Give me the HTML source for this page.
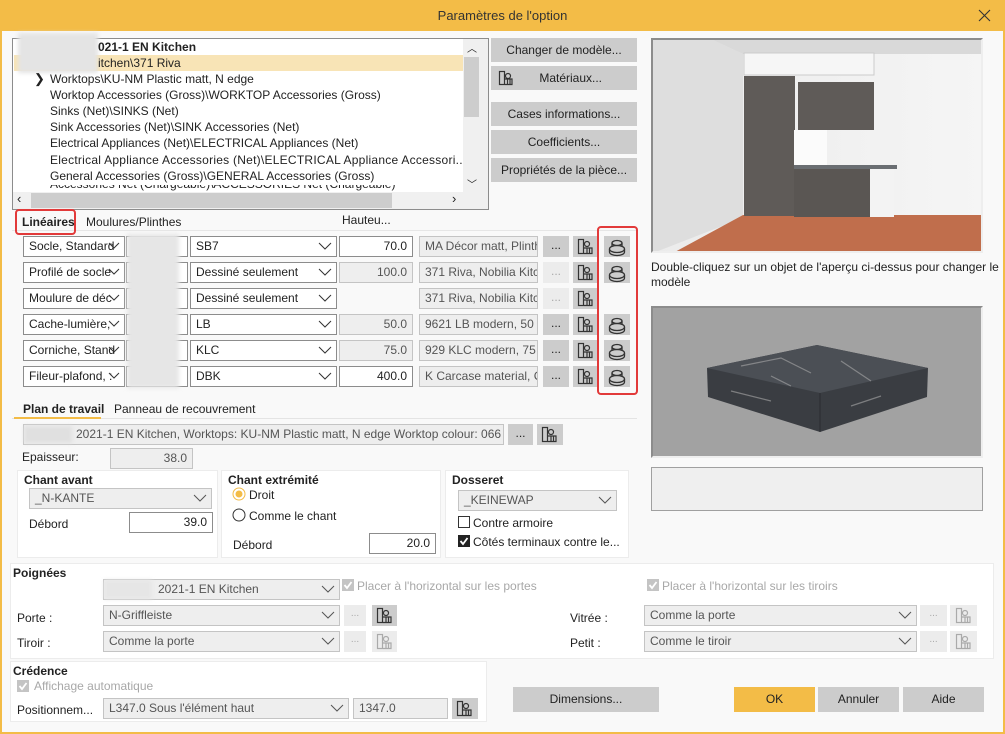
<!DOCTYPE html>
<html><head><meta charset="utf-8"><style>
*{box-sizing:border-box;margin:0;padding:0}
body{width:1005px;height:734px;overflow:hidden;background:#f9f9f9;font-family:"Liberation Sans",sans-serif;font-size:12px;color:#222}
.a{position:absolute}
.win{position:absolute;left:0;top:0;width:1005px;height:734px;border:2px solid #f3bc47;border-top:none;background:#f9f9f9}
.tb{position:absolute;left:0;top:0;width:1005px;height:31px;background:#f3bc47;text-align:center;line-height:31px;font-size:13px;color:#333}
.sel{position:absolute;height:21px;background:#fff;border:1px solid #8c8c8c;line-height:19px;padding-left:5px;white-space:nowrap;overflow:hidden;color:#222}
.dis{background:#eeeeee;border-color:#c4c4c4;color:#555}
.num{text-align:right;padding-right:5px;padding-left:0}
.chev{position:absolute;right:4px;top:5px}
.btn{position:absolute;background:#cccccc;text-align:center;color:#222;line-height:24px}
.sb{position:absolute;background:#cccccc;height:21px}
.sb.l{background:#ececec}
.blur{position:absolute;background:#e4e4e4;filter:blur(2px)}
.grp{position:absolute;background:#fff;border:1px solid #ececec}
.b{font-weight:bold}
.lbl{position:absolute;white-space:nowrap}
.li{position:absolute;left:50px;white-space:nowrap}
</style></head><body>
<div class="win"></div>
<div class="tb">Paramètres de l'option</div>
<svg class="a" style="left:978px;top:9px" width="13" height="13"><path d="M1 1l11 11M12 1L1 12" stroke="#333" stroke-width="1.1"/></svg>

<!-- tree list -->
<div class="a" style="left:12px;top:38px;width:477px;height:172px;border:1px solid #8c8c8c;background:#fff"></div>
<div class="a" style="left:14px;top:55px;width:449px;height:16px;background:#f8e4b6"></div>
<div class="blur" style="left:18px;top:33px;width:80px;height:40px"></div>
<div class="lbl b" style="left:98px;top:40px;font-size:12px">021-1 EN Kitchen</div>
<div class="lbl" style="left:98px;top:56px">itchen\371 Riva</div>
<div class="lbl" style="left:34px;top:71px;font-size:13px">❯</div>
<div class="li" style="top:72px">Worktops\KU-NM Plastic matt, N edge</div>
<div class="li" style="top:88px">Worktop Accessories (Gross)\WORKTOP Accessories (Gross)</div>
<div class="li" style="top:104px">Sinks (Net)\SINKS (Net)</div>
<div class="li" style="top:120px">Sink Accessories (Net)\SINK Accessories (Net)</div>
<div class="li" style="top:136px">Electrical Appliances (Net)\ELECTRICAL Appliances (Net)</div>
<div class="li" style="top:153px;letter-spacing:0.25px">Electrical Appliance Accessories (Net)\ELECTRICAL Appliance Accessori...</div>
<div class="li" style="top:169px">General Accessories (Gross)\GENERAL Accessories (Gross)</div>
<div class="a" style="left:50px;top:185px;width:410px;height:7px;overflow:hidden"><div style="margin-top:-8px;white-space:nowrap">Accessories Net (Chargeable)\ACCESSORIES Net (Chargeable)</div></div>
<div class="a" style="left:463px;top:39px;width:25px;height:154px;background:#f0f0f0"></div>
<div class="a" style="left:464px;top:57px;width:15px;height:60px;background:#cdcdcd"></div>
<div class="lbl" style="left:467px;top:40px;font-size:10px">︿</div>
<div class="lbl" style="left:467px;top:176px;font-size:10px">﹀</div>
<div class="a" style="left:13px;top:192px;width:475px;height:17px;background:#f0f0f0"></div>
<div class="a" style="left:31px;top:193px;width:361px;height:15px;background:#cdcdcd"></div>
<div class="lbl" style="left:17px;top:191px;font-size:13px">‹</div>
<div class="lbl" style="left:452px;top:191px;font-size:13px">›</div>

<!-- right buttons -->
<div class="btn" style="left:491px;top:38px;width:146px;height:24px">Changer de modèle...</div>
<div class="btn" style="left:491px;top:66px;width:146px;height:24px">&nbsp;&nbsp;&nbsp;&nbsp;Matériaux...</div>
<svg class="a" style="left:498px;top:70px" width="16" height="16" viewBox="0 0 16 16" fill="none" stroke="#333" stroke-width="1.2"><rect x="1.5" y="1.5" width="5" height="13"/><circle cx="10" cy="6" r="2.5"/><path d="M7 9h7v5.5H7M9.5 9v5.5M12 9v5.5"/></svg>
<div class="btn" style="left:491px;top:102px;width:146px;height:24px">Cases informations...</div>
<div class="btn" style="left:491px;top:130px;width:146px;height:24px">Coefficients...</div>
<div class="btn" style="left:491px;top:158px;width:146px;height:24px">Propriétés de la pièce...</div>

<!-- preview 1 -->
<div class="a" style="left:651px;top:38px;width:332px;height:215px;border:2px solid #8c8c8c;border-right-color:#eee;border-bottom-color:#eee;background:#eeeeee;overflow:hidden">
<svg width="330" height="213" style="position:absolute;left:0;top:0">
<defs><linearGradient id="w" x1="0" x2="1"><stop offset="0" stop-color="#ebebeb"/><stop offset="1" stop-color="#f5f5f5"/></linearGradient></defs>
<rect width="330" height="213" fill="url(#w)"/>
<polygon points="0,0 60,0 90,14 90,178 0,213" fill="#dedede"/>
<polygon points="60,0 330,0 330,14 90,14" fill="#d9d9d9"/>
<polygon points="90,175 330,175 330,213 20,213" fill="#c06e4c"/>
<rect x="91" y="13" width="130" height="22" fill="#f6f6f6" stroke="#ccc"/>
<rect x="91" y="36" width="51" height="140" fill="#5f5b58"/>
<rect x="145" y="42" width="76" height="48" fill="#5f5b58"/>
<rect x="141" y="90" width="33" height="38" fill="#fbfbfb"/>
<rect x="141" y="125" width="103" height="4" fill="#6a6e72"/>
<rect x="141" y="129" width="76" height="48" fill="#5a5653"/>
<rect x="217" y="129" width="24" height="48" fill="#f3f3f3"/>
</svg>
</div>
<div class="lbl" style="left:651px;top:260px;line-height:15px;color:#222">Double-cliquez sur un objet de l'aperçu ci-dessus pour changer le<br>modèle</div>
<!-- preview 2 -->
<div class="a" style="left:651px;top:306px;width:332px;height:152px;border:2px solid #8c8c8c;border-right-color:#eee;border-bottom-color:#eee;background:#a2a2a2"></div>
<svg class="a" style="left:651px;top:306px" width="332" height="152"><polygon points="56,62 166,39 277,62 276,91 169,126 57,91" fill="#3a3d42"/><polygon points="56,62 166,39 277,62 169,87" fill="#4b4f55"/><path d="M169 87v39" stroke="#2a2c30"/><path d="M90 60l40 -8l30 15M190 55l30 20M80 85l40 10M200 100l30 -10M120 70l20 10" stroke="#aaa" stroke-width="1.2" fill="none" opacity=".6"/></svg>
<div class="a" style="left:651px;top:467px;width:332px;height:44px;border:1px solid #a0a0a0;background:#efefef"></div>

<!-- tabs linéaires -->
<div class="a" style="left:12px;top:230px;width:625px;height:1px;background:#e6e6e6"></div>
<div class="a" style="left:15px;top:209px;width:61px;height:26px;border:2px solid #e23a3a;border-radius:4px"></div>
<div class="lbl b" style="left:22px;top:215px">Linéaires</div>
<div class="lbl" style="left:86px;top:215px">Moulures/Plinthes</div>
<div class="lbl" style="left:342px;top:213px">Hauteu...</div>

<div class="sel" style="left:23px;top:236px;width:102px">Socle, Standard<svg class="chev" width="12" height="8"><path d="M1 1l5 5 5-5" stroke="#333" fill="none"/></svg></div>
<div class="sel" style="left:23px;top:262px;width:102px">Profilé de socle<svg class="chev" width="12" height="8"><path d="M1 1l5 5 5-5" stroke="#333" fill="none"/></svg></div>
<div class="sel" style="left:23px;top:288px;width:102px">Moulure de déc<svg class="chev" width="12" height="8"><path d="M1 1l5 5 5-5" stroke="#333" fill="none"/></svg></div>
<div class="sel" style="left:23px;top:314px;width:102px">Cache-lumière,<svg class="chev" width="12" height="8"><path d="M1 1l5 5 5-5" stroke="#333" fill="none"/></svg></div>
<div class="sel" style="left:23px;top:340px;width:102px">Corniche, Stand<svg class="chev" width="12" height="8"><path d="M1 1l5 5 5-5" stroke="#333" fill="none"/></svg></div>
<div class="sel" style="left:23px;top:366px;width:102px">Fileur-plafond, :<svg class="chev" width="12" height="8"><path d="M1 1l5 5 5-5" stroke="#333" fill="none"/></svg></div>
<div class="sel" style="left:126px;top:236px;width:62px"></div>
<div class="sel" style="left:126px;top:262px;width:62px"></div>
<div class="sel" style="left:126px;top:288px;width:62px"></div>
<div class="sel" style="left:126px;top:314px;width:62px"></div>
<div class="sel" style="left:126px;top:340px;width:62px"></div>
<div class="sel" style="left:126px;top:366px;width:62px"></div>
<div class="blur" style="left:127px;top:234px;width:52px;height:154px;background:#e6e6e6"></div>
<div class="sel" style="left:190px;top:236px;width:147px">SB7<svg class="chev" width="14" height="9"><path d="M1 1l6 6 6-6" stroke="#333" fill="none"/></svg></div>
<div class="sel" style="left:190px;top:262px;width:147px">Dessiné seulement<svg class="chev" width="14" height="9"><path d="M1 1l6 6 6-6" stroke="#333" fill="none"/></svg></div>
<div class="sel" style="left:190px;top:288px;width:147px">Dessiné seulement<svg class="chev" width="14" height="9"><path d="M1 1l6 6 6-6" stroke="#333" fill="none"/></svg></div>
<div class="sel" style="left:190px;top:314px;width:147px">LB<svg class="chev" width="14" height="9"><path d="M1 1l6 6 6-6" stroke="#333" fill="none"/></svg></div>
<div class="sel" style="left:190px;top:340px;width:147px">KLC<svg class="chev" width="14" height="9"><path d="M1 1l6 6 6-6" stroke="#333" fill="none"/></svg></div>
<div class="sel" style="left:190px;top:366px;width:147px">DBK<svg class="chev" width="14" height="9"><path d="M1 1l6 6 6-6" stroke="#333" fill="none"/></svg></div>
<div class="sel num" style="left:339px;top:236px;width:74px">70.0</div>
<div class="sel num dis" style="left:339px;top:262px;width:74px">100.0</div>
<div class="sel num dis" style="left:339px;top:314px;width:74px">50.0</div>
<div class="sel num dis" style="left:339px;top:340px;width:74px">75.0</div>
<div class="sel num" style="left:339px;top:366px;width:74px">400.0</div>
<div class="sel dis" style="left:419px;top:236px;width:119px">MA Décor matt, Plinth</div>
<div class="sel dis" style="left:419px;top:262px;width:119px">371 Riva, Nobilia Kitch</div>
<div class="sel dis" style="left:419px;top:288px;width:119px">371 Riva, Nobilia Kitch</div>
<div class="sel dis" style="left:419px;top:314px;width:119px">9621 LB modern, 50 r</div>
<div class="sel dis" style="left:419px;top:340px;width:119px">929 KLC modern, 75 r</div>
<div class="sel dis" style="left:419px;top:366px;width:119px">K Carcase material, Ce</div>
<div class="btn" style="left:543px;top:236px;width:26px;height:21px;line-height:18px">...</div>
<div class="btn" style="left:543px;top:262px;width:26px;height:21px;line-height:18px;background:#ececec;color:#aaa">...</div>
<div class="btn" style="left:543px;top:288px;width:26px;height:21px;line-height:18px;background:#ececec;color:#aaa">...</div>
<div class="btn" style="left:543px;top:314px;width:26px;height:21px;line-height:18px">...</div>
<div class="btn" style="left:543px;top:340px;width:26px;height:21px;line-height:18px">...</div>
<div class="btn" style="left:543px;top:366px;width:26px;height:21px;line-height:18px">...</div>
<div class="sb" style="left:573px;top:236px;width:25px"></div><div class="sb" style="left:573px;top:262px;width:25px"></div><div class="sb" style="left:573px;top:288px;width:25px"></div><div class="sb" style="left:573px;top:314px;width:25px"></div><div class="sb" style="left:573px;top:340px;width:25px"></div><div class="sb" style="left:573px;top:366px;width:25px"></div>
<svg class="a" style="left:577px;top:238px" width="17" height="180" viewBox="0 0 17 180" fill="none" stroke="#333" stroke-width="1.2">
<g id="mi"><rect x="1.5" y="1.5" width="5" height="14"/><circle cx="10" cy="6" r="2.5"/><path d="M7 10h8v5.5H7M10 10v5.5M12.5 10v5.5"/></g>
<use href="#mi" y="26"/><use href="#mi" y="52"/><use href="#mi" y="78"/><use href="#mi" y="104"/><use href="#mi" y="130"/></svg>
<div class="sb" style="left:604px;top:236px;width:26px"></div><div class="sb" style="left:604px;top:262px;width:26px"></div><div class="sb" style="left:604px;top:314px;width:26px"></div><div class="sb" style="left:604px;top:340px;width:26px"></div><div class="sb" style="left:604px;top:366px;width:26px"></div>
<svg class="a" style="left:608px;top:238px" width="18" height="150" viewBox="0 0 18 150" fill="none" stroke="#333" stroke-width="1.3">
<g id="cy"><ellipse cx="9" cy="5" rx="5" ry="2.5"/><path d="M4 5v3M14 5v3"/><ellipse cx="9" cy="11" rx="7.5" ry="3.5"/><path d="M1.5 11v3c0 2 3.5 3.5 7.5 3.5s7.5-1.5 7.5-3.5v-3"/></g>
<use href="#cy" y="26"/><use href="#cy" y="78"/><use href="#cy" y="104"/><use href="#cy" y="130"/></svg>
<div class="a" style="left:597px;top:226px;width:41px;height:169px;border:2px solid #e23a3a;border-radius:4px"></div>

<!-- plan de travail tabs -->
<div class="lbl b" style="left:23px;top:402px">Plan de travail</div>
<div class="lbl" style="left:114px;top:402px">Panneau de recouvrement</div>
<div class="a" style="left:12px;top:418px;width:625px;height:1px;background:#e4e4e4"></div>
<div class="a" style="left:14px;top:417px;width:87px;height:2px;background:#f3bc47"></div>
<div class="sel dis" style="left:23px;top:424px;width:481px;padding-left:52px">2021-1 EN Kitchen, Worktops: KU-NM Plastic matt, N edge Worktop colour: 066 Slate</div>
<div class="blur" style="left:24px;top:426px;width:48px;height:17px;background:#e0e0e0"></div>
<div class="btn" style="left:508px;top:424px;width:25px;height:21px;line-height:18px">...</div>
<div class="sb" style="left:537px;top:424px;width:26px"></div>
<svg class="a" style="left:541px;top:426px" width="17" height="17" viewBox="0 0 17 17" fill="none" stroke="#333" stroke-width="1.2"><use href="#mi"/></svg>
<div class="lbl" style="left:22px;top:450px">Epaisseur:</div>
<div class="sel num dis" style="left:110px;top:448px;width:83px">38.0</div>

<!-- groups -->
<div class="grp" style="left:17px;top:470px;width:201px;height:88px"></div>
<div class="lbl b" style="left:24px;top:473px">Chant avant</div>
<div class="sel dis" style="left:29px;top:488px;width:183px">_N-KANTE<svg class="chev" width="14" height="9"><path d="M1 1l6 6 6-6" stroke="#555" fill="none"/></svg></div>
<div class="lbl" style="left:29px;top:517px">Débord</div>
<div class="sel num" style="left:129px;top:512px;width:84px">39.0</div>

<div class="grp" style="left:221px;top:470px;width:220px;height:88px"></div>
<div class="lbl b" style="left:228px;top:473px">Chant extrémité</div>
<svg class="a" style="left:232px;top:487px" width="14" height="14"><circle cx="7" cy="7" r="6" fill="#fff" stroke="#f3bc47"/><circle cx="7" cy="7" r="3.5" fill="#f3bc47"/></svg>
<div class="lbl" style="left:249px;top:488px">Droit</div>
<svg class="a" style="left:232px;top:508px" width="14" height="14"><circle cx="7" cy="7" r="6" fill="#fff" stroke="#333"/></svg>
<div class="lbl" style="left:249px;top:509px">Comme le chant</div>
<div class="lbl" style="left:233px;top:538px">Débord</div>
<div class="sel num" style="left:369px;top:533px;width:67px">20.0</div>

<div class="grp" style="left:445px;top:470px;width:184px;height:88px"></div>
<div class="lbl b" style="left:452px;top:473px">Dosseret</div>
<div class="sel dis" style="left:458px;top:490px;width:159px">_KEINEWAP<svg class="chev" width="14" height="9"><path d="M1 1l6 6 6-6" stroke="#555" fill="none"/></svg></div>
<div class="a" style="left:458px;top:516px;width:12px;height:12px;border:1px solid #333;background:#fff"></div>
<div class="lbl" style="left:473px;top:516px">Contre armoire</div>
<svg class="a" style="left:458px;top:535px" width="12" height="12"><rect width="12" height="12" fill="#222"/><path d="M2.5 6l2.5 3 4.5-6" stroke="#fff" stroke-width="1.8" fill="none"/></svg>
<div class="lbl" style="left:473px;top:535px">Côtés terminaux contre le...</div>

<!-- Poignées -->
<div class="grp" style="left:10px;top:563px;width:984px;height:96px"></div>
<div class="lbl b" style="left:13px;top:566px">Poignées</div>
<div class="sel dis" style="left:103px;top:579px;width:237px;padding-left:54px">2021-1 EN Kitchen<svg class="chev" width="14" height="9"><path d="M1 1l6 6 6-6" stroke="#555" fill="none"/></svg></div>
<div class="blur" style="left:104px;top:580px;width:48px;height:19px;background:#e6e6e6"></div>
<svg class="a" style="left:342px;top:579px" width="12" height="12"><rect width="12" height="12" fill="#c4c4c4"/><path d="M2.5 6l2.5 3 4.5-6" stroke="#fff" stroke-width="1.8" fill="none"/></svg>
<div class="lbl" style="left:357px;top:579px;color:#a8a8a8">Placer à l'horizontal sur les portes</div>
<svg class="a" style="left:647px;top:579px" width="12" height="12"><rect width="12" height="12" fill="#c4c4c4"/><path d="M2.5 6l2.5 3 4.5-6" stroke="#fff" stroke-width="1.8" fill="none"/></svg>
<div class="lbl" style="left:662px;top:579px;color:#a8a8a8">Placer à l'horizontal sur les tiroirs</div>
<div class="lbl" style="left:17px;top:611px">Porte :</div>
<div class="sel dis" style="left:103px;top:605px;width:237px">N-Griffleiste<svg class="chev" width="14" height="9"><path d="M1 1l6 6 6-6" stroke="#555" fill="none"/></svg></div>
<div class="btn" style="left:344px;top:605px;width:22px;height:21px;line-height:18px;background:#ececec;color:#aaa;font-size:10px">...</div>
<div class="sb" style="left:372px;top:605px;width:25px"></div>
<svg class="a" style="left:376px;top:607px" width="17" height="17" fill="none" stroke="#333" stroke-width="1.2"><use href="#mi"/></svg>
<div class="lbl" style="left:17px;top:636px">Tiroir :</div>
<div class="sel dis" style="left:103px;top:631px;width:237px">Comme la porte<svg class="chev" width="14" height="9"><path d="M1 1l6 6 6-6" stroke="#555" fill="none"/></svg></div>
<div class="btn" style="left:344px;top:631px;width:22px;height:21px;line-height:18px;background:#ececec;color:#aaa;font-size:10px">...</div>
<div class="sb l" style="left:372px;top:631px;width:25px"></div>
<svg class="a" style="left:376px;top:633px" width="17" height="17" fill="none" stroke="#aaa" stroke-width="1.2"><use href="#mi"/></svg>
<div class="lbl" style="left:570px;top:611px">Vitrée :</div>
<div class="sel dis" style="left:644px;top:605px;width:273px">Comme la porte<svg class="chev" width="14" height="9"><path d="M1 1l6 6 6-6" stroke="#555" fill="none"/></svg></div>
<div class="btn" style="left:920px;top:605px;width:27px;height:21px;line-height:18px;background:#ececec;color:#aaa;font-size:10px">...</div>
<div class="sb l" style="left:950px;top:605px;width:27px"></div>
<svg class="a" style="left:955px;top:607px" width="17" height="17" fill="none" stroke="#aaa" stroke-width="1.2"><use href="#mi"/></svg>
<div class="lbl" style="left:570px;top:636px">Petit :</div>
<div class="sel dis" style="left:644px;top:631px;width:273px">Comme le tiroir<svg class="chev" width="14" height="9"><path d="M1 1l6 6 6-6" stroke="#555" fill="none"/></svg></div>
<div class="btn" style="left:920px;top:631px;width:27px;height:21px;line-height:18px;background:#ececec;color:#aaa;font-size:10px">...</div>
<div class="sb l" style="left:950px;top:631px;width:27px"></div>
<svg class="a" style="left:955px;top:633px" width="17" height="17" fill="none" stroke="#aaa" stroke-width="1.2"><use href="#mi"/></svg>

<!-- Crédence -->
<div class="grp" style="left:10px;top:661px;width:477px;height:61px"></div>
<div class="lbl b" style="left:13px;top:664px">Crédence</div>
<svg class="a" style="left:17px;top:680px" width="12" height="12"><rect width="12" height="12" fill="#c4c4c4"/><path d="M2.5 6l2.5 3 4.5-6" stroke="#fff" stroke-width="1.8" fill="none"/></svg>
<div class="lbl" style="left:34px;top:679px;color:#a8a8a8">Affichage automatique</div>
<div class="lbl" style="left:17px;top:703px">Positionnem...</div>
<div class="sel dis" style="left:103px;top:698px;width:246px">L347.0 Sous l'élément haut<svg class="chev" width="14" height="9"><path d="M1 1l6 6 6-6" stroke="#555" fill="none"/></svg></div>
<div class="sel dis" style="left:353px;top:698px;width:95px">1347.0</div>
<div class="sb" style="left:452px;top:698px;width:26px"></div>
<svg class="a" style="left:456px;top:700px" width="17" height="17" fill="none" stroke="#333" stroke-width="1.2"><use href="#mi"/></svg>

<!-- bottom buttons -->
<div class="btn" style="left:513px;top:687px;width:146px;height:25px">Dimensions...</div>
<div class="btn" style="left:734px;top:687px;width:81px;height:25px;background:#f3bc47">OK</div>
<div class="btn" style="left:818px;top:687px;width:81px;height:25px">Annuler</div>
<div class="btn" style="left:903px;top:687px;width:81px;height:25px">Aide</div>
</body></html>
